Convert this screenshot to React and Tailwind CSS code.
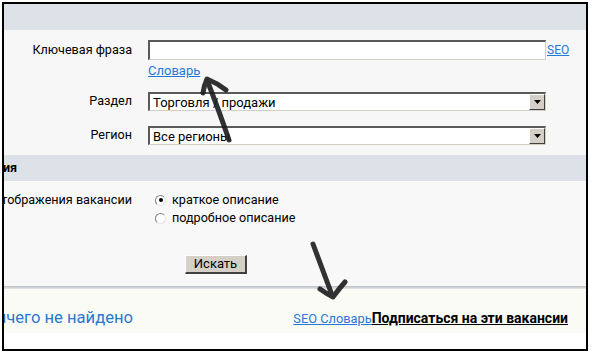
const font = { fontFamily: 'Roboto, "Liberation Sans", sans-serif' }

function Select({ value }) {
  return (
    <div className="w-[398px] h-[19px] flex items-center bg-white border-t-2 border-l-2 border-t-[#5a5a5a] border-l-[#5a5a5a] border-b border-r border-b-[#d4d0c8] border-r-[#d4d0c8]">
      <div className="flex-1 pl-[3px] text-[13px] leading-none text-black">{value}</div>
      <div className="w-[16px] h-[16px] bg-[#d4d0c8] border-t border-l border-t-white border-l-white border-b border-r border-b-[#404040] border-r-[#404040] flex items-center justify-center">
        <svg width="7" height="4" viewBox="0 0 7 4"><path d="M0 0h7L3.5 4z" fill="#000" /></svg>
      </div>
    </div>
  )
}

function Radio({ checked, label }) {
  return (
    <div className="flex items-center h-[18px]">
      <div className="w-[11px] h-[11px] ml-[7px] rounded-full bg-white border border-t-[#808080] border-l-[#808080] border-b-[#e4e4e4] border-r-[#e4e4e4] flex items-center justify-center">
        {checked && <div className="w-[4px] h-[4px] rounded-full bg-black" />}
      </div>
      <span className="ml-[6px] text-[12.6px] text-black">{label}</span>
    </div>
  )
}

function Label({ children, className = '' }) {
  return (
    <div className={`w-[128px] shrink-0 flex justify-end ${className}`}>
      <span className="whitespace-nowrap text-[12.6px] text-black">{children}</span>
    </div>
  )
}

export default function App() {
  return (
    <div className="relative w-[592px] h-[356px] bg-white pt-[2px] pl-[2px]" style={font}>
      <div className="w-[586px] h-[349px] border-2 border-black overflow-hidden flex flex-col">
        <div className="h-[26px] shrink-0 bg-[#dde1e8]" />

        <div className="h-[125px] shrink-0 bg-[#f7f7f7] pt-[10px]">
          <div className="flex">
            <Label className="h-[20px] items-center">Ключевая фраза</Label>
            <div className="ml-[16px]">
              <div className="flex items-center">
                <div className="w-[398px] h-[20px] bg-white border-t-2 border-l-2 border-t-[#5a5a5a] border-l-[#5a5a5a] border-b border-r border-b-[#d4d0c8] border-r-[#d4d0c8]" />
                <a className="ml-[1px] text-[12px] text-[#2678d8] underline">SEO</a>
              </div>
              <a className="block mt-[3px] h-[16px] text-[13px] leading-[16px] text-[#2678d8] underline">Словарь</a>
            </div>
          </div>
          <div className="flex mt-[13px]">
            <Label className="h-[19px] items-center">Раздел</Label>
            <div className="ml-[16px]"><Select value="Торговля / продажи" /></div>
          </div>
          <div className="flex mt-[15px]">
            <Label className="h-[19px] items-center">Регион</Label>
            <div className="ml-[16px]"><Select value="Все регионы" /></div>
          </div>
        </div>

        <div className="h-[26px] shrink-0 bg-[#dde1e8] flex items-center">
          <div className="w-[13px] flex justify-end">
            <span className="whitespace-nowrap text-[12.5px] font-bold text-black">Дополнительные условия</span>
          </div>
        </div>

        <div className="h-[105px] shrink-0 bg-[#f8f8f8] pt-[10px]">
          <div className="flex">
            <Label className="h-[18px] items-center">Вид отображения вакансии</Label>
            <div className="ml-[16px]">
              <Radio checked label="краткое описание" />
              <Radio label="подробное описание" />
            </div>
          </div>
          <div className="ml-[181px] mt-[28px] w-[62px] h-[19px] bg-[#d4d0c8] border-t border-l border-t-white border-l-white border-b-2 border-r-2 border-b-[#404040] border-r-[#404040] flex items-center justify-center text-[13px] text-black">
            Искать
          </div>
        </div>

        <div className="h-[3px] shrink-0 bg-gradient-to-b from-[#b9bdc2] to-[#e6e9ec]" />
        <div className="h-[44px] shrink-0 bg-[#fafbf5] flex items-center justify-between pt-[14px] pr-[18px]">
          <div className="w-[129px] flex justify-end">
            <span className="whitespace-nowrap text-[16.6px] text-[#2a78cc]">Ничего не найдено</span>
          </div>
          <div className="whitespace-nowrap">
            <a className="text-[12.8px] text-[#2678d8] underline">SEO Словарь</a>
            <a className="text-[14px] font-bold text-black underline">Подписаться на эти вакансии</a>
          </div>
        </div>
        <div className="flex-1 bg-white" />
      </div>

      <svg className="absolute inset-0 pointer-events-none" width="592" height="356" viewBox="0 0 592 356">
        <g fill="none" stroke="#1c1c1c" strokeWidth="5" strokeLinecap="round" strokeLinejoin="round" opacity="0.9">
          <path d="M229 140 Q218 108 207 80" />
          <path d="M203 93 Q204 85 207 79 Q217 83 226 90" />
          <path d="M313 244 Q322 268 332 295" />
          <path d="M320 289 Q327 294 333 297 Q338 290 345 282" />
        </g>
      </svg>
    </div>
  )
}
